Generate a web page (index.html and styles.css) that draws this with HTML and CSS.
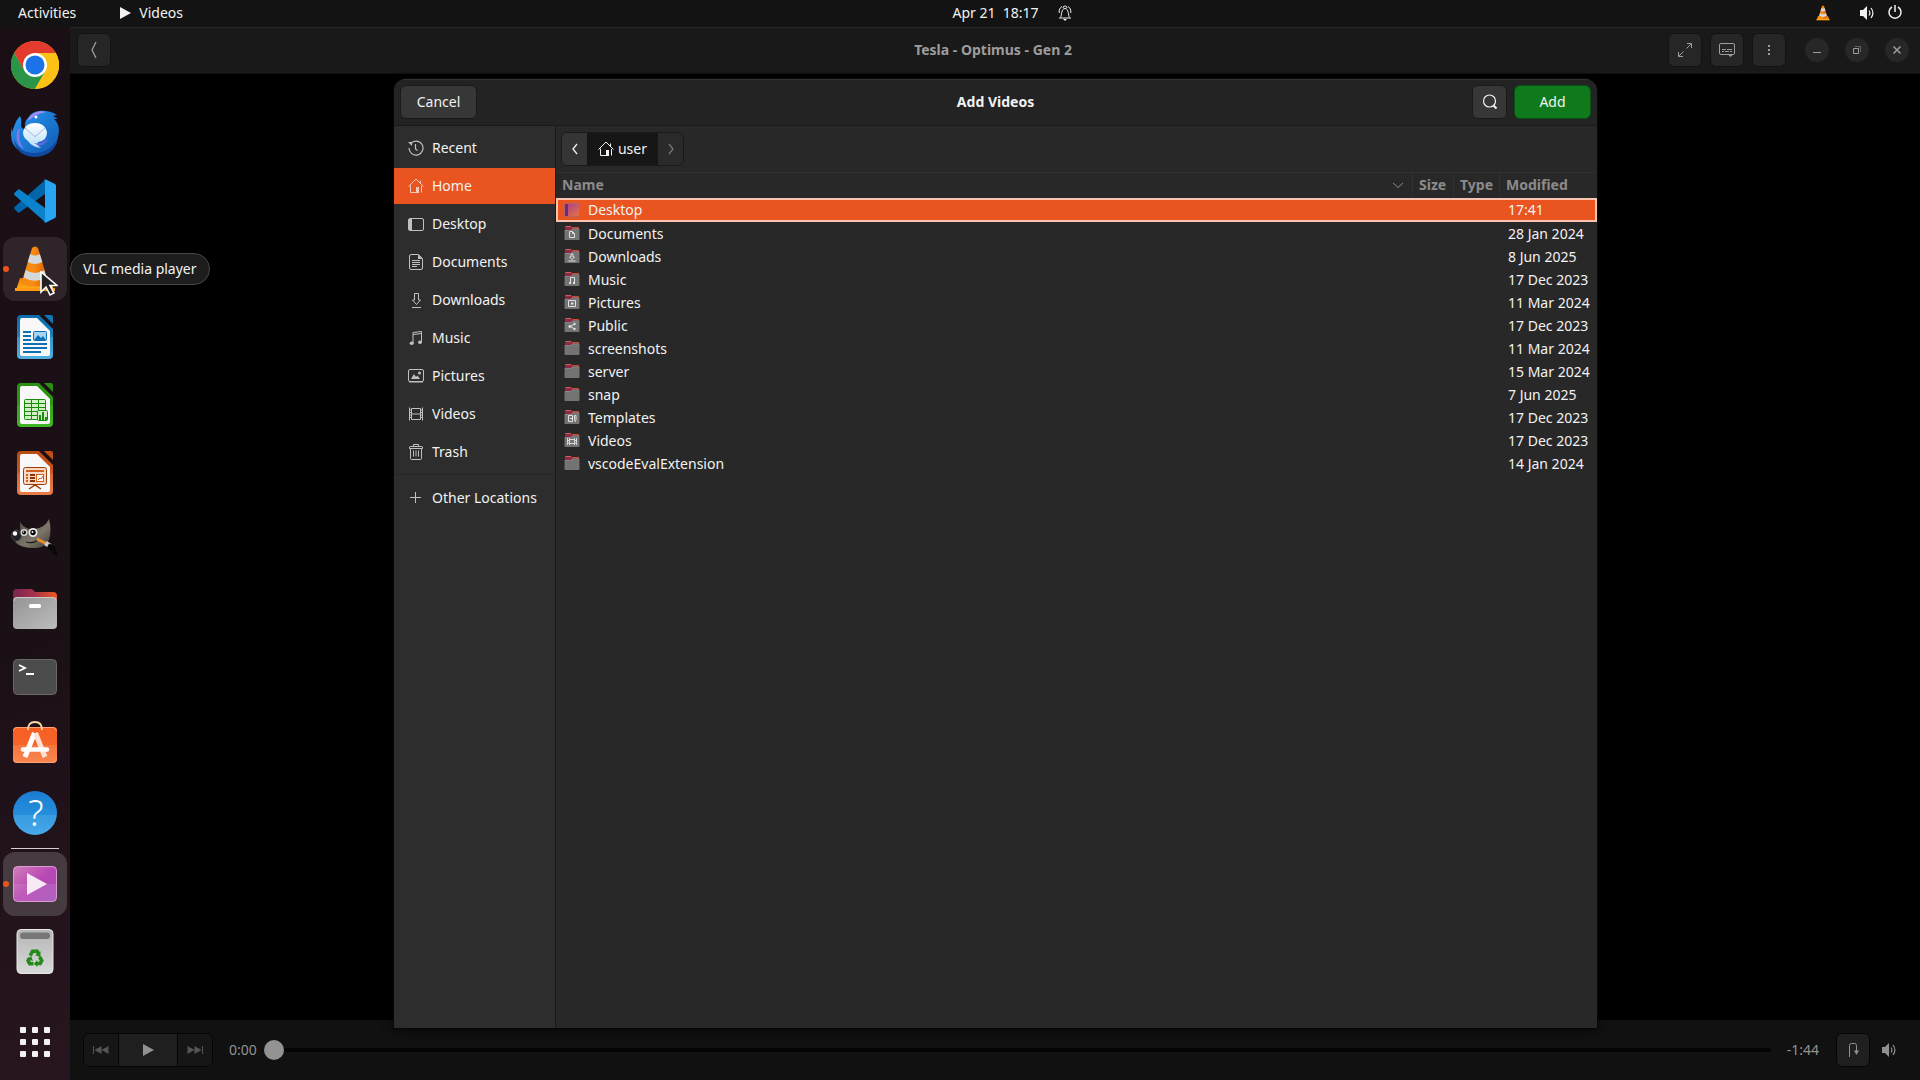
FILE: index.html
```
<!DOCTYPE html>
<html lang="en">
<head>
<meta charset="UTF-8">
<meta name="viewport" content="width=device-width, initial-scale=1.0">
<title>Videos</title>
<link rel="stylesheet" href="styles.css">
</head>
<body>

<!-- Shared icons -->
<svg class="defs" aria-hidden="true">
  <defs>
    <linearGradient id="g-blue" x1="0" y1="0" x2="0" y2="1"><stop offset="0" stop-color="#0b6cad"/><stop offset=".49" stop-color="#1c7fbd"/><stop offset=".5" stop-color="#3593c9"/><stop offset="1" stop-color="#4fb0e0"/></linearGradient>
    <linearGradient id="g-green" x1="0" y1="0" x2="0" y2="1"><stop offset="0" stop-color="#2a8f12"/><stop offset=".49" stop-color="#2a9a12"/><stop offset=".5" stop-color="#37a51f"/><stop offset="1" stop-color="#3fb626"/></linearGradient>
    <linearGradient id="g-orange" x1="0" y1="0" x2="0" y2="1"><stop offset="0" stop-color="#b84a12"/><stop offset=".49" stop-color="#c9561f"/><stop offset=".5" stop-color="#d86430"/><stop offset="1" stop-color="#ea7d4c"/></linearGradient>
    <linearGradient id="g-cone" x1="0" y1="0" x2="1" y2="0"><stop offset="0" stop-color="#f58a10"/><stop offset=".45" stop-color="#f98b12"/><stop offset="1" stop-color="#d65a00"/></linearGradient>
    <linearGradient id="g-base" x1="0" y1="0" x2="0" y2="1"><stop offset="0" stop-color="#f07800"/><stop offset="1" stop-color="#ffb31a"/></linearGradient>
    <linearGradient id="g-tab" x1="0" y1="0" x2="1" y2="0"><stop offset="0" stop-color="#7a2450"/><stop offset=".5" stop-color="#a8324a"/><stop offset="1" stop-color="#f05a24"/></linearGradient>
    <linearGradient id="g-folder" x1="0" y1="0" x2="1" y2="1"><stop offset="0" stop-color="#949494"/><stop offset="1" stop-color="#bdbdbd"/></linearGradient>
    <linearGradient id="g-desk" x1="0" y1="0" x2="1" y2="1"><stop offset="0" stop-color="#a63c93"/><stop offset="1" stop-color="#e8743c"/></linearGradient>
    <linearGradient id="g-video" x1="0" y1="0" x2="1" y2="1"><stop offset="0" stop-color="#d27fb9"/><stop offset=".5" stop-color="#b847b4"/><stop offset="1" stop-color="#a350b8"/></linearGradient>
    <linearGradient id="g-help" x1="0" y1="0" x2="0" y2="1"><stop offset="0" stop-color="#1b7cd2"/><stop offset=".54" stop-color="#258fdc"/><stop offset=".55" stop-color="#369be0"/><stop offset="1" stop-color="#48a8ea"/></linearGradient>
    <linearGradient id="g-store" x1="0" y1="0" x2="0" y2="1"><stop offset="0" stop-color="#f55f22"/><stop offset=".5" stop-color="#f5642c"/><stop offset=".51" stop-color="#f67440"/><stop offset="1" stop-color="#f88750"/></linearGradient>
    <linearGradient id="g-bird" x1="0" y1="0" x2="1" y2="1"><stop offset="0" stop-color="#2a9bf2"/><stop offset="1" stop-color="#0f56b3"/></linearGradient>
    <linearGradient id="g-mail" x1="0" y1="0" x2="0" y2="1"><stop offset="0" stop-color="#ffffff"/><stop offset="1" stop-color="#b5dcfa"/></linearGradient>
    <linearGradient id="g-bin" x1="0" y1="0" x2="0" y2="1"><stop offset="0" stop-color="#b5b5b5"/><stop offset="1" stop-color="#d9d9d9"/></linearGradient>
    <linearGradient id="g-gimp" x1="0" y1="0" x2="1" y2="1"><stop offset="0" stop-color="#4c483f"/><stop offset=".6" stop-color="#7d766a"/><stop offset="1" stop-color="#3c3831"/></linearGradient>

    <symbol id="i-home" viewBox="0 0 16 16"><path d="M.5 8.500 8 1l7.500 7.500M2.500 7.500v7h6M13.500 8v6.500M12.500 2.500v2.500" fill="none" stroke="currentColor"/><path d="M8 9h3v6H8z" fill="currentColor"/></symbol>
    <symbol id="i-left" viewBox="0 0 16 16"><path d="M10 3 6 8l4 5" fill="none" stroke="currentColor" stroke-width="1.300"/></symbol>
    <symbol id="i-right" viewBox="0 0 16 16"><path d="m6 3 4 5-4 5" fill="none" stroke="currentColor" stroke-width="1.300"/></symbol>
    <symbol id="i-play" viewBox="0 0 16 16"><path d="M3 2v12l11-6z" fill="currentColor"/></symbol>
    <symbol id="i-volume" viewBox="0 0 16 16"><path d="M1 5h3l4-4v14l-4-4H1z" fill="currentColor"/><path d="M10 5.500q1.800 2.500 0 5M12 3q3.800 5 0 10" fill="none" stroke="currentColor" stroke-width="1.200"/></symbol>
    <symbol id="i-note" viewBox="0 0 16 16"><path d="M5 13V2.500l8.500-1V12M5 4.500l8.500-1" fill="none" stroke="currentColor"/><ellipse cx="3.700" cy="13.300" rx="2" ry="1.700" fill="currentColor"/><ellipse cx="12" cy="12.300" rx="2" ry="1.700" fill="currentColor"/></symbol>
    <symbol id="i-film" viewBox="0 0 16 16"><path d="M1.500 1.500v13M14.500 1.500v13M3.500 2.500h9v11h-9zM3.500 8h9M1.500 4h2M1.500 6.500h2M1.500 9h2M1.500 11.500h2M12.500 4h2M12.500 6.500h2M12.500 9h2M12.500 11.500h2" fill="none" stroke="currentColor"/></symbol>
    <symbol id="i-folder" viewBox="0 0 16 16"><path d="M1 1q0-1 1-1h5l1 1h6q1 0 1 1v4H1z" fill="#8f2944"/><path d="M8 1.500h6.500V3" fill="none" stroke="#d3482c"/><path d="M1.500.500H7" stroke="#c36068"/><path d="M.5 4.500Q.500 4 1 4h6l1.500-1.500H15q.500 0 .500.500v10q0 1-1 1h-13q-1 0-1-1z" fill="#737373"/><path d="M1 4.500h6L8.500 3H15" fill="none" stroke="#8d8d8d" stroke-width=".7"/></symbol>
    <symbol id="cone" viewBox="0 0 48 48">
      <path d="M9 33h30l4 12H5z" fill="url(#g-base)"/><path d="M4 43h40v3H4z" fill="#ff9a14"/>
      <path d="M21 3q3-3 6 0l10.500 35q-13.500 7-27 0z" fill="url(#g-cone)"/>
      <path d="m19.200 9-2.500 8q7.300 4 14.600 0l-2.500-8q-4.800 3-9.600 0zM14.800 25l-2.100 7.500q11.300 6.500 22.600 0L33.200 25q-9.200 6-18.400 0z" fill="#d5d8da"/>
    </symbol>
    <symbol id="recycle" viewBox="0 0 18 18"><g fill="none" stroke="#258a1c" stroke-width="3.600"><path d="M4.200 6.800 6.500 2.300h4.700l1.300 2.200M13.700 8l2 3.500-1.500 3H10.500M7.500 14.700H3.800l-1.700-3 1.400-2.400"/></g><path d="m9.300 6.200 5.200-4v6zM.300 9.300l5-1.700 1.700 4.700zM11.300 11v7L7.800 14.700z" fill="#258a1c"/></symbol>
  </defs>
</svg>

<!-- Top bar -->
<header class="topbar">
  <div class="topbar-left">
    <button class="bar-btn">Activities</button>
    <button class="bar-btn app-menu"><svg class="icon"><use href="#i-play"/></svg>Videos</button>
  </div>
  <button class="bar-btn clock"><span>Apr 21&nbsp; 18:17</span>
    <svg class="icon" viewBox="0 0 16 16"><path d="M2 13h12M3.500 12.500c1.500-2 .5-9 4.500-9s3 7 4.500 9M2.200 8c-.4-3 .8-5.500 2.800-6.500M13.800 8c.4-3-.8-5.500-2.800-6.500M6 3q0-2 2-2t2 2" fill="none" stroke="currentColor"/><path d="M6 14h4l-2 2z" fill="currentColor"/></svg>
  </button>
  <div class="topbar-right">
    <svg class="icon tray"><use href="#cone"/></svg>
    <button class="bar-btn system" aria-label="System">
      <svg class="icon"><use href="#i-volume"/></svg>
      <svg class="icon" viewBox="0 0 16 16"><path d="M8 0v7M5 2a6 6 0 1 0 6 0" fill="none" stroke="currentColor" stroke-width="1.500"/></svg>
    </button>
  </div>
</header>

<div class="desktop">

<!-- Dock -->
<nav class="dock">
  <button class="dock-item" aria-label="Google Chrome">
    <svg viewBox="0 0 48 48"><circle cx="24" cy="24" r="24" fill="#fbc116"/><path d="M24 24 24 12h20.800A24 24 0 0 0 3.200 12L13.600 30z" fill="#e33b2e"/><path d="M3.200 12A24 24 0 0 0 24 48l10.400-18-10.400 0-10.400 0z" fill="#2b9547"/><path d="M24 48 34.400 30 34 12h10.800A24 24 0 0 1 24 48z" fill="#fbc116"/><circle cx="24" cy="24" r="12" fill="#fff"/><circle cx="24" cy="24" r="9.500" fill="#1a73e8"/></svg>
  </button>
  <button class="dock-item" aria-label="Thunderbird">
    <svg viewBox="0 -1 48 48"><path d="M1 17q-4 17 8 24 14 9 28 1 10-7 11-21 0-8-5-12h4l-5-3 4-1q-8-5-18-4-8 1-11 7-4 3-3 11-4 0-4-4 1-5-1-9-3 3-5 8l-3 8z" fill="url(#g-bird)"/><path d="M16 11q4-9 14-10l5 1q-10 2-15 7z" fill="#9d8df2"/><path d="M7 19q-5 14 6 20-7-9-4-20z" fill="#7f7be8"/><path d="M3 28q4 15 20 15 15 0 24-14-4 17-23 18Q4 46 3 28z" fill="#1049a0"/><path d="M12 22q2-9 12-9t12 9q0 9-9 10-2 3 3 6-9-1-13-7-5-3-5-9z" fill="url(#g-mail)"/><path d="m14 18 9 8q1 1 2 0l9-8" fill="none" stroke="#9fbcd6"/><path d="M23 33q8 2 14-5-1 6-9 8z" fill="#6667dc"/><circle cx="25" cy="7" r="1.500" fill="#fff"/></svg>
  </button>
  <button class="dock-item" aria-label="Visual Studio Code">
    <svg viewBox="0 0 48 48"><path d="M34 3 3.500 30q-1 1 0 2l3 3q1 1 2 .5L34 17z" fill="#0065a9"/><path d="M34 45 3.500 18q-1-1 0-2l3-3q1-1 2-.5L34 31z" fill="#0a82cc"/><path d="M33 3q1-1 3 0l8 4q1 .5 1 2v30q0 1.500-1 2l-8 4q-2 1-3 0 1 0 1-2V5q0-2-1-2z" fill="#27a5f2"/></svg>
  </button>
  <div class="dock-cell">
    <button class="dock-item hover running" aria-label="VLC media player"><svg><use href="#cone"/></svg></button>
    <span class="tooltip" role="tooltip">VLC media player</span>
    <svg class="pointer" viewBox="0 0 18 26"><path d="M1 1v20l5-5 4 8 4-2-4-7.500h7z" fill="#222" stroke="#fff" stroke-width="1.600"/></svg>
  </div>
  <button class="dock-item" aria-label="LibreOffice Writer">
    <svg viewBox="0 -1 48 48"><path d="M10 1h18l14 14v26q0 4-4 4H10q-4 0-4-4V5q0-4 4-4z" fill="url(#g-blue)"/><path d="M33 1h7q2 0 2 2v7z" fill="#1275b5"/><path d="M11 4h15l13 13v23q0 2-2 2H11q-2 0-2-2V6q0-2 2-2z" fill="#f8f8f8"/><path d="M12 18h8M12 22h8M12 26h8M12 30h24M12 34h24M12 38h18" stroke="#0b70b4" stroke-width="2"/><rect x="22.500" y="17.500" width="13" height="9" rx="1" fill="#a8d4f0" stroke="#0b70b4"/><path d="m23 26 4-5 3 3 2-2 3 4z" fill="#0b70b4"/></svg>
  </button>
  <button class="dock-item" aria-label="LibreOffice Calc">
    <svg viewBox="0 -1 48 48"><path d="M10 1h18l14 14v26q0 4-4 4H10q-4 0-4-4V5q0-4 4-4z" fill="url(#g-green)"/><path d="M33 1h7q2 0 2 2v7z" fill="#2a8f12"/><path d="M11 4h15l13 13v23q0 2-2 2H11q-2 0-2-2V6q0-2 2-2z" fill="#f8f8f8"/><rect x="13.500" y="17.500" width="21" height="20" rx="1" fill="#d2f0c6" stroke="#188a0c"/><path d="M14 21.500h20M14 25.500h20M14 29.500h20M14 33.500h20M20.500 18v19M27.500 18v19" stroke="#188a0c"/><rect x="26.500" y="28.500" width="10" height="10" rx="1" fill="#d2f0c6" stroke="#188a0c"/><path d="M29 38v-5M32 38v-8M35 38v-3" stroke="#188a0c" stroke-width="2"/></svg>
  </button>
  <button class="dock-item" aria-label="LibreOffice Impress">
    <svg viewBox="0 -1 48 48"><path d="M10 1h18l14 14v26q0 4-4 4H10q-4 0-4-4V5q0-4 4-4z" fill="url(#g-orange)"/><path d="M33 1h7q2 0 2 2v7z" fill="#c24e14"/><path d="M11 4h15l13 13v23q0 2-2 2H11q-2 0-2-2V6q0-2 2-2z" fill="#f8f8f8"/><rect x="12.500" y="17.500" width="23" height="17" rx="2" fill="#fbd9c6" stroke="#a03c08"/><path d="M15 21h18M15 25h2M15 28h2M15 31h2" stroke="#d2601c" stroke-width="2"/><path d="M19 25h5M19 28h5M19 31h5" stroke="#8c3406" stroke-width="2"/><rect x="25.500" y="24.500" width="7" height="7" fill="#fff" stroke="#d2601c"/><path d="m27 30 2-2 1 1 2-3" fill="none" stroke="#d2601c"/><path d="m18 39 6-4 6 4" fill="none" stroke="#a03c08" stroke-width="1.500"/></svg>
  </button>
  <button class="dock-item" aria-label="GIMP">
    <svg viewBox="0 -4 48 48"><path d="M9 1q5 8 14 7 11-1 15-10 3 11 0 21-5 9-15 8Q10 27 4 21q5-3 6-7-1-6-1-13z" fill="url(#g-gimp)"/><ellipse cx="5.500" cy="14.500" rx="5" ry="5.500" fill="#202225" stroke="#59605f" stroke-width=".6"/><circle cx="4" cy="12.500" r="2.200" fill="#fff"/><circle cx="13" cy="11.500" r="3.500" fill="#d6d6d6"/><circle cx="22" cy="11.500" r="4.500" fill="#ececec"/><circle cx="13" cy="11.500" r="2"/><circle cx="22" cy="11.500" r="2.700"/><circle cx="12.500" cy="11" r=".8" fill="#fff"/><circle cx="21.500" cy="11" r="1" fill="#fff"/><path d="M15 21q7 2 12-2" fill="none" stroke="#1b1916" stroke-width="1.200"/><path d="m26 18 10 5" stroke="#e8912a" stroke-width="3"/><path d="m34.500 22 4.500 3" stroke="#c9ccd0" stroke-width="5"/><path d="m38 22.500 6 3 3 10q-5-1-7-6l-4-3z" fill="#090909"/></svg>
  </button>
  <button class="dock-item" aria-label="Files">
    <svg viewBox="0 -1 48 48"><path d="M2 7q0-4 4-4h15l3 3h18q4 0 4 4v10H2z" fill="url(#g-tab)"/><rect x="2" y="11" width="44" height="32" rx="4" fill="url(#g-folder)"/><path d="M3 15q0-3.500 3-3.500h36q3 0 3 3.500" fill="none" stroke="#c9c9c9"/><rect x="18" y="18" width="12" height="4" rx="1.500" fill="#fff"/></svg>
  </button>
  <button class="dock-item" aria-label="Terminal">
    <svg viewBox="0 -1 48 48"><rect x="2.500" y="5.500" width="43" height="35" rx="4" fill="#4c4c4c" stroke="#686868"/><path d="m8 11 6 3-6 3M15 20h8" fill="none" stroke="#fff" stroke-width="1.800"/></svg>
  </button>
  <button class="dock-item" aria-label="Software">
    <svg viewBox="0 0 48 48"><rect x="2" y="6" width="44" height="36" rx="4" fill="url(#g-store)"/><path d="M2.500 38q0 3.500 3.500 3.500h36q3.500 0 3.500-3.500M2.500 10q0-3.500 3.500-3.500h36q3.500 0 3.500 3.500" fill="none" stroke="#fba276"/><path d="M17 9q0-8 7-8t7 8" fill="none" stroke="#f7d9a0" stroke-width="1.800"/><path d="M23.500 12 14 36" stroke="#fff" stroke-width="5"/><path d="M24.500 12 34 36" stroke="#fde0d3" stroke-width="5"/><path d="M12 28.500h24" stroke="#fff" stroke-width="4.500" stroke-linecap="round"/></svg>
  </button>
  <button class="dock-item" aria-label="Help">
    <svg viewBox="0 0 48 48"><circle cx="24" cy="24" r="22" fill="url(#g-help)"/><text class="help-mark" x="25" y="37" text-anchor="middle">?</text></svg>
  </button>
  <div class="dock-sep"></div>
  <button class="dock-item active running" aria-label="Videos">
    <svg viewBox="0 0 48 48"><rect x="2.500" y="6.500" width="43" height="35" rx="4" fill="url(#g-video)" stroke="#dc9bd4"/><path d="M3 24h42v14q0 3-3 3H6q-3 0-3-3z" fill="#fff" opacity=".1"/><path d="M16 13v22l20-11z" fill="#f7eaf5"/></svg>
  </button>
  <button class="dock-item" aria-label="Trash">
    <svg viewBox="0 0 48 48"><rect x="6" y="1.500" width="36" height="44" rx="4" fill="url(#g-bin)" stroke="#e8e8e8"/><rect x="9" y="4.500" width="30" height="6.500" rx="3" fill="#777"/><use href="#recycle" x="15" y="21" width="18" height="18"/></svg>
  </button>
  <button class="dock-item apps" aria-label="Show Applications">
    <svg viewBox="0 0 48 48"><g fill="#f2f2f2"><rect x="9" y="9" width="6" height="6" rx="1"/><rect x="21" y="9" width="6" height="6" rx="1"/><rect x="33" y="9" width="6" height="6" rx="1"/><rect x="9" y="21" width="6" height="6" rx="1"/><rect x="21" y="21" width="6" height="6" rx="1"/><rect x="33" y="21" width="6" height="6" rx="1"/><rect x="9" y="33" width="6" height="6" rx="1"/><rect x="21" y="33" width="6" height="6" rx="1"/><rect x="33" y="33" width="6" height="6" rx="1"/></g></svg>
  </button>
</nav>

<!-- Videos window -->
<main class="window">
  <div class="titlebar">
    <div class="titlebar-side"><button class="tool-btn" aria-label="Back"><svg class="icon" viewBox="0 0 16 16"><path d="M10 0 6 8l4 8" fill="none" stroke="currentColor" stroke-width="1.300"/></svg></button></div>
    <h1>Tesla - Optimus - Gen 2</h1>
    <div class="titlebar-side end">
      <button class="tool-btn" aria-label="Fullscreen"><svg class="icon" viewBox="0 0 16 16"><path d="M10 1.500h4.500V6M14 2 9.500 6.500M6 14.500H1.500V10M2 14l4.500-4.500" fill="none" stroke="currentColor"/></svg></button>
      <button class="tool-btn" aria-label="Languages and subtitles"><svg class="icon" viewBox="0 0 16 16"><path d="M2 1.500h12q1.500 0 1.500 1.500v8q0 1.500-1.500 1.500H2Q.500 12.500.500 11V3Q.500 1.500 2 1.500zM3 7.500h4M8 7.500h5M3 9.500h2M6 9.500h4M11 9.500h2" fill="none" stroke="currentColor"/><path d="M9 12.500h5L11.500 15z" fill="currentColor"/></svg></button>
      <button class="tool-btn" aria-label="Menu"><svg class="icon" viewBox="0 0 16 16"><path d="M7 3h2v2H7zM7 7h2v2H7zM7 11h2v2H7z" fill="currentColor"/></svg></button>
      <div class="win-btns">
        <button class="win-btn" aria-label="Minimize"><svg class="icon" viewBox="0 0 16 16"><path d="M4 10.500h8" stroke="currentColor"/></svg></button>
        <button class="win-btn" aria-label="Restore"><svg class="icon" viewBox="0 0 16 16"><path d="M4.500 6.500h5v5h-5z" fill="none" stroke="currentColor"/><path d="M6 4.500h5.500V10" fill="none" stroke="currentColor" opacity=".5"/></svg></button>
        <button class="win-btn" aria-label="Close"><svg class="icon" viewBox="0 0 16 16"><path d="m4.500 4.500 7 7M11.500 4.500l-7 7" stroke="currentColor" stroke-width="1.500"/></svg></button>
      </div>
    </div>
  </div>

  <div class="stage"></div>

  <div class="controls">
    <div class="transport">
      <button aria-label="Previous" disabled><svg class="icon" viewBox="0 0 16 16"><path d="M.500 4v8" stroke="currentColor"/><path d="M8.500 4v8L1.500 8zM15.500 4v8l-7-4z" fill="currentColor"/></svg></button>
      <button class="wide" aria-label="Play"><svg class="icon"><use href="#i-play"/></svg></button>
      <button aria-label="Next" disabled><svg class="icon" viewBox="0 0 16 16"><path d="M15.500 4v8" stroke="currentColor"/><path d="M.500 4v8l7-4zM7.500 4v8l7-4z" fill="currentColor"/></svg></button>
    </div>
    <span class="time">0:00</span>
    <input class="seek" type="range" min="0" max="104" value="0" aria-label="Position">
    <span class="time">-1:44</span>
    <button class="tool-btn repeat" aria-label="Repeat"><svg class="icon" viewBox="0 0 16 16"><path d="M4.500 15V3.500Q4.500 1.500 6.500 1.500h3q2 0 2 2V9" fill="none" stroke="currentColor"/><path d="M9 8.500h5L11.500 13z" fill="currentColor"/></svg></button>
    <button class="plain-btn" aria-label="Volume"><svg class="icon"><use href="#i-volume"/></svg></button>
  </div>

  <!-- File chooser -->
  <section class="dialog" role="dialog" aria-labelledby="dialog-title">
    <div class="dialog-head">
      <div class="head-side"><button class="btn">Cancel</button></div>
      <h2 id="dialog-title">Add Videos</h2>
      <div class="head-side end">
        <button class="btn square" aria-label="Search"><svg class="icon" viewBox="0 0 16 16"><circle cx="7.500" cy="7" r="6" fill="none" stroke="currentColor" stroke-width="1.200"/><path d="m11.500 11.500 3 3" stroke="currentColor" stroke-width="2"/></svg></button>
        <button class="btn suggested">Add</button>
      </div>
    </div>
    <div class="dialog-body">
      <nav class="places">
        <a href="#"><svg class="icon" viewBox="0 0 16 16"><path d="M2.700 3.500A7 7 0 1 1 1 8M7.500 4v5l2 1.500" fill="none" stroke="currentColor" stroke-width="1.200"/><path d="M0 2h4v4z" fill="currentColor"/></svg>Recent</a>
        <a href="#" class="current"><svg class="icon"><use href="#i-home"/></svg>Home</a>
        <a href="#"><svg class="icon" viewBox="0 0 16 16"><rect x=".5" y="2.500" width="15" height="12" rx="1.500" fill="none" stroke="currentColor"/><path d="M1 3h3v11H1z" fill="currentColor"/></svg>Desktop</a>
        <a href="#"><svg class="icon" viewBox="0 0 16 16"><path d="M3 .500h7.500l4 4V14q0 1.500-1.500 1.500H3Q1.500 15.500 1.500 14V2Q1.500.500 3 .500zM4 6.500h8M4 8.500h8M4 10.500h8M4 12.500h5" fill="none" stroke="currentColor"/><path d="M10 .500V5h4.500z" fill="currentColor"/></svg>Documents</a>
        <a href="#"><svg class="icon" viewBox="0 0 16 16"><path d="M6.500 1.500h4V8h2l-4 4.500-4-4.500h2zM4 15.500h9" fill="none" stroke="currentColor"/></svg>Downloads</a>
        <a href="#"><svg class="icon"><use href="#i-note"/></svg>Music</a>
        <a href="#"><svg class="icon" viewBox="0 0 16 16"><rect x=".5" y="1.500" width="15" height="12" rx="1.500" fill="none" stroke="currentColor"/><path d="M1 13h14v1.500H1zM3 11l3-5 2 3 1.500-1.500L12 11z" fill="currentColor"/><circle cx="11.500" cy="5" r="1.500" fill="currentColor"/></svg>Pictures</a>
        <a href="#"><svg class="icon"><use href="#i-film"/></svg>Videos</a>
        <a href="#"><svg class="icon" viewBox="0 0 16 16"><path d="M5.500 2.500v-2h5v2M1.500 3v1.500h13V3q0-.5-1-.5h-11q-1 0-1 .500zM2.500 4.500v10q0 1 1 1h9q1 0 1-1v-10M5.500 6.500v6M8 6.500v6M10.500 6.500v6" fill="none" stroke="currentColor"/></svg>Trash</a>
        <hr>
        <a href="#"><svg class="icon" viewBox="0 0 16 16"><path d="M2 7.500h11M7.500 2v11" stroke="currentColor"/></svg>Other Locations</a>
      </nav>

      <div class="files">
        <div class="pathbar">
          <button aria-label="Back"><svg class="icon"><use href="#i-left"/></svg></button>
          <button class="here"><svg class="icon"><use href="#i-home"/></svg>user</button>
          <button aria-label="Forward" disabled><svg class="icon"><use href="#i-right"/></svg></button>
        </div>
        <table>
          <thead>
            <tr>
              <th class="col-name"><div class="sort">Name<svg class="icon" viewBox="0 0 16 16"><path d="m3 6 5 4.500L13 6" fill="none" stroke="currentColor"/></svg></div></th>
              <th class="col-size">Size</th><th class="col-type">Type</th><th class="col-mod">Modified</th>
            </tr>
          </thead>
          <tbody>
            <tr class="selected"><td><div class="name"><svg class="icon" viewBox="0 0 16 16"><rect x=".5" y="1.500" width="15" height="13" rx="1.500" fill="url(#g-desk)" stroke="#a46a75" stroke-width=".8"/><path d="M1 2h3v12H1z" fill="#6c2c77"/></svg>Desktop</div></td><td></td><td></td><td>17:41</td></tr>
            <tr><td><div class="name"><svg class="icon" viewBox="0 0 16 16"><use href="#i-folder"/><path d="M5.500 5.500h3l2 2v4h-5zM8.500 5.500v2h2" fill="none" stroke="#e0e0e0"/></svg>Documents</div></td><td></td><td></td><td>28 Jan 2024</td></tr>
            <tr><td><div class="name"><svg class="icon" viewBox="0 0 16 16"><use href="#i-folder"/><path d="M7 5v3H5.500L8 10.500 10.500 8H9V5zM4.500 12h7" fill="none" stroke="#e0e0e0"/></svg>Downloads</div></td><td></td><td></td><td>8 Jun 2025</td></tr>
            <tr><td><div class="name"><svg class="icon" viewBox="0 0 16 16"><use href="#i-folder"/><path d="M6.500 11V5.500h4V11" fill="none" stroke="#e0e0e0"/><path d="M5 10h2v2H5zM9 10h2v2H9z" fill="#e0e0e0"/></svg>Music</div></td><td></td><td></td><td>17 Dec 2023</td></tr>
            <tr><td><div class="name"><svg class="icon" viewBox="0 0 16 16"><use href="#i-folder"/><path d="M4.500 5.500h7v6h-7z" fill="none" stroke="#e0e0e0"/><path d="M7 7.500h2.500v2H7z" fill="#e0e0e0"/></svg>Pictures</div></td><td></td><td></td><td>11 Mar 2024</td></tr>
            <tr><td><div class="name"><svg class="icon" viewBox="0 0 16 16"><use href="#i-folder"/><path d="m10.500 6-4 2.500 4 2.500" fill="none" stroke="#e0e0e0"/><g fill="#e0e0e0"><circle cx="10.500" cy="6" r="1.200"/><circle cx="5.800" cy="8.500" r="1.400"/><circle cx="10.500" cy="11" r="1.200"/></g></svg>Public</div></td><td></td><td></td><td>17 Dec 2023</td></tr>
            <tr><td><div class="name"><svg class="icon"><use href="#i-folder"/></svg>screenshots</div></td><td></td><td></td><td>11 Mar 2024</td></tr>
            <tr><td><div class="name"><svg class="icon"><use href="#i-folder"/></svg>server</div></td><td></td><td></td><td>15 Mar 2024</td></tr>
            <tr><td><div class="name"><svg class="icon"><use href="#i-folder"/></svg>snap</div></td><td></td><td></td><td>7 Jun 2025</td></tr>
            <tr><td><div class="name"><svg class="icon" viewBox="0 0 16 16"><use href="#i-folder"/><path d="M4.500 5.500h4v6h-4zM6 8.500h2M10.500 5.500h1.500v4l-.7 2-.8-2z" fill="none" stroke="#e0e0e0"/></svg>Templates</div></td><td></td><td></td><td>17 Dec 2023</td></tr>
            <tr><td><div class="name"><svg class="icon" viewBox="0 0 16 16"><use href="#i-folder"/><path d="M3.500 5v7M12.500 5v7M5.500 5v7M10.500 5v7M5.500 6.500h5M5.500 10.500h5M3.500 7.500h2M3.500 10h2M10.500 7.500h2M10.500 10h2" fill="none" stroke="#e0e0e0" stroke-width=".9"/></svg>Videos</div></td><td></td><td></td><td>17 Dec 2023</td></tr>
            <tr><td><div class="name"><svg class="icon"><use href="#i-folder"/></svg>vscodeEvalExtension</div></td><td></td><td></td><td>14 Jan 2024</td></tr>
          </tbody>
        </table>
      </div>
    </div>
  </section>
</main>
</div>

</body>
</html>
```
FILE: styles.css
```
:root { --orange:#e95420; --green:#0f7a1c; --edge:#1a1a1a; --text:#f2f2f2; --dim:#919191; }
*{box-sizing:border-box;}
body{margin:0;height:100vh;display:flex;flex-direction:column;background:#000;color:var(--text);font-family:"Noto Sans","Open Sans",sans-serif;font-size:14px;line-height:20px;overflow:hidden;}
button{font:inherit;color:inherit;background:none;border:0;padding:0;cursor:pointer;}
h1,h2{margin:0;font-size:14px;font-weight:700;}
a{color:inherit;text-decoration:none;}
.icon{width:16px;height:16px;flex:none;display:block;}
.defs{position:absolute;width:0;height:0;}

/* Top bar */
.topbar{height:27px;display:flex;align-items:center;background:#131313;padding:0 17px 1px 18px;}
.topbar-left,.topbar-right{flex:1;display:flex;align-items:center;}
.topbar-left{gap:41px;}
.topbar-right{justify-content:flex-end;gap:28px;}
.bar-btn{display:flex;align-items:center;gap:6px;}
.clock{margin-left:70px;padding-left:34px;gap:18px;}
.system{gap:12px;}

.desktop{flex:1;display:flex;min-height:0;}

/* Dock */
.dock{width:70px;flex:none;display:flex;flex-direction:column;align-items:center;padding:6px 0;background:linear-gradient(160deg,#1a0f15 0%,#1c1017 60%,#28151f 100%);position:relative;z-index:2;}
.dock-item{width:64px;height:64px;flex:none;display:flex;align-items:center;justify-content:center;border-radius:12px;margin-bottom:4px;position:relative;}
.dock-item svg{width:48px;height:48px;}
.dock-item.hover{background:#2e242a;}
.dock-item.active{background:#473b42;}
.dock-item.running::before{content:"";position:absolute;left:0;top:29px;width:6px;height:6px;border-radius:50%;background:var(--orange);}
.dock-cell{position:relative;}
.dock-sep{width:48px;height:1px;margin:-1px 0 3px;flex:none;background:#d5d0d3;}
.apps{margin-top:auto;margin-bottom:0;}
.help-mark{font-family:"Noto Sans",sans-serif;font-size:36px;font-weight:300;fill:#fff;}
.tooltip{position:absolute;left:67px;top:16px;padding:5px 12px;background:#1d1d1d;border:1px solid #474747;border-radius:16px;white-space:nowrap;}
.pointer{position:absolute;left:37px;top:34px;width:18px;height:26px;}

/* Player window */
.window{flex:1;min-width:0;display:flex;flex-direction:column;position:relative;}
.titlebar{height:47px;flex:none;display:flex;align-items:center;background:#191919;border-top:1px solid #272727;border-bottom:1px solid #101010;padding:0 11px 1px 7px;color:#9d9d9d;}
.titlebar-side{flex:1;display:flex;align-items:center;gap:8px;}
.titlebar-side.end{justify-content:flex-end;}
.tool-btn{width:34px;height:34px;display:flex;align-items:center;justify-content:center;background:#262626;border:1px solid #121212;border-radius:6px;}
.win-btns{display:flex;gap:16px;margin-left:11px;}
.win-btn{width:24px;height:24px;display:flex;align-items:center;justify-content:center;border-radius:50%;background:#272727;}
.stage{flex:1;background:#000;}
.controls{height:60px;flex:none;display:flex;align-items:center;background:#111;padding:0 23px 0 13px;color:var(--dim);}
.transport{display:flex;border:1px solid #050505;border-radius:6px;overflow:hidden;margin-right:16px;}
.transport button{width:34px;height:32px;display:flex;align-items:center;justify-content:center;background:#161616;}
.transport button:disabled{color:#555;}
.transport .wide{width:60px;background:#1f1f1f;border:solid #050505;border-width:0 1px;}
.seek{flex:1;min-width:0;height:20px;margin:0 16px 0 7px;appearance:none;background:none;}
.seek::-webkit-slider-runnable-track{height:4px;border-radius:2px;background:#040404;}
.seek::-webkit-slider-thumb{appearance:none;width:20px;height:20px;margin-top:-8px;border-radius:50%;background:#939393;}
.repeat{margin:0 11px 0 17px;border-color:#050505;background:#1f1f1f;}

/* File chooser */
.dialog{position:absolute;left:324px;right:323px;top:52px;bottom:52px;display:flex;flex-direction:column;background:#282828;border-radius:12px 12px 0 0;box-shadow:0 3px 12px rgba(0,0,0,.6),0 0 0 1px #0a0a0a;overflow:hidden;}
.dialog-head{height:47px;flex:none;display:flex;align-items:center;padding:0 6px 1px;background:#232323;border-top:1px solid #333;border-bottom:1px solid var(--edge);}
.head-side{flex:1;display:flex;gap:7px;}
.head-side.end{justify-content:flex-end;}
.btn{width:77px;height:34px;background:#373737;border:1px solid var(--edge);border-radius:6px;display:flex;align-items:center;justify-content:center;}
.btn.square{width:35px;}
.btn.suggested{background:var(--green);border-color:#0c4f14;}
.dialog-body{flex:1;display:flex;min-height:0;}
.places{width:162px;flex:none;padding-top:4px;background:#2d2d2d;border-right:1px solid var(--edge);}
.places a{height:36px;margin-bottom:2px;padding-left:14px;display:flex;align-items:center;gap:8px;white-space:nowrap;}
.places .icon{opacity:.75;}
.places a.current{background:var(--orange);}
.places hr{margin:4px 0 5px;border:0;border-top:1px solid #262626;}
.files{flex:1;min-width:0;}
.pathbar{width:max-content;display:flex;margin:6px 5px;border:1px solid var(--edge);border-radius:6px;overflow:hidden;}
.pathbar button{height:32px;width:25px;display:flex;align-items:center;justify-content:center;gap:4px;background:#353535;}
.pathbar .here{width:71px;background:#161616;}
.pathbar button:disabled{background:#2a2a2a;color:#777;}

/* File list */
table{width:100%;border-collapse:separate;border-spacing:0;table-layout:fixed;}
th{height:26px;padding:0 6px 2px;border-top:1px solid #303030;border-left:1px solid #303030;text-align:left;font-weight:700;color:#8b8b8b;}
th.col-name{border-left:0;}
.col-size{width:41px;}
.col-type{width:46px;}
.col-mod{width:98px;}
.sort{display:flex;align-items:center;justify-content:space-between;}
td{height:23px;padding:0 0 0 8px;white-space:nowrap;}
td:last-child{padding-left:9px;}
.name{display:flex;align-items:center;gap:8px;}
.selected{background:var(--orange);outline:2px solid #f7c4b0;outline-offset:-2px;}
.selected td{height:24px;}
```
